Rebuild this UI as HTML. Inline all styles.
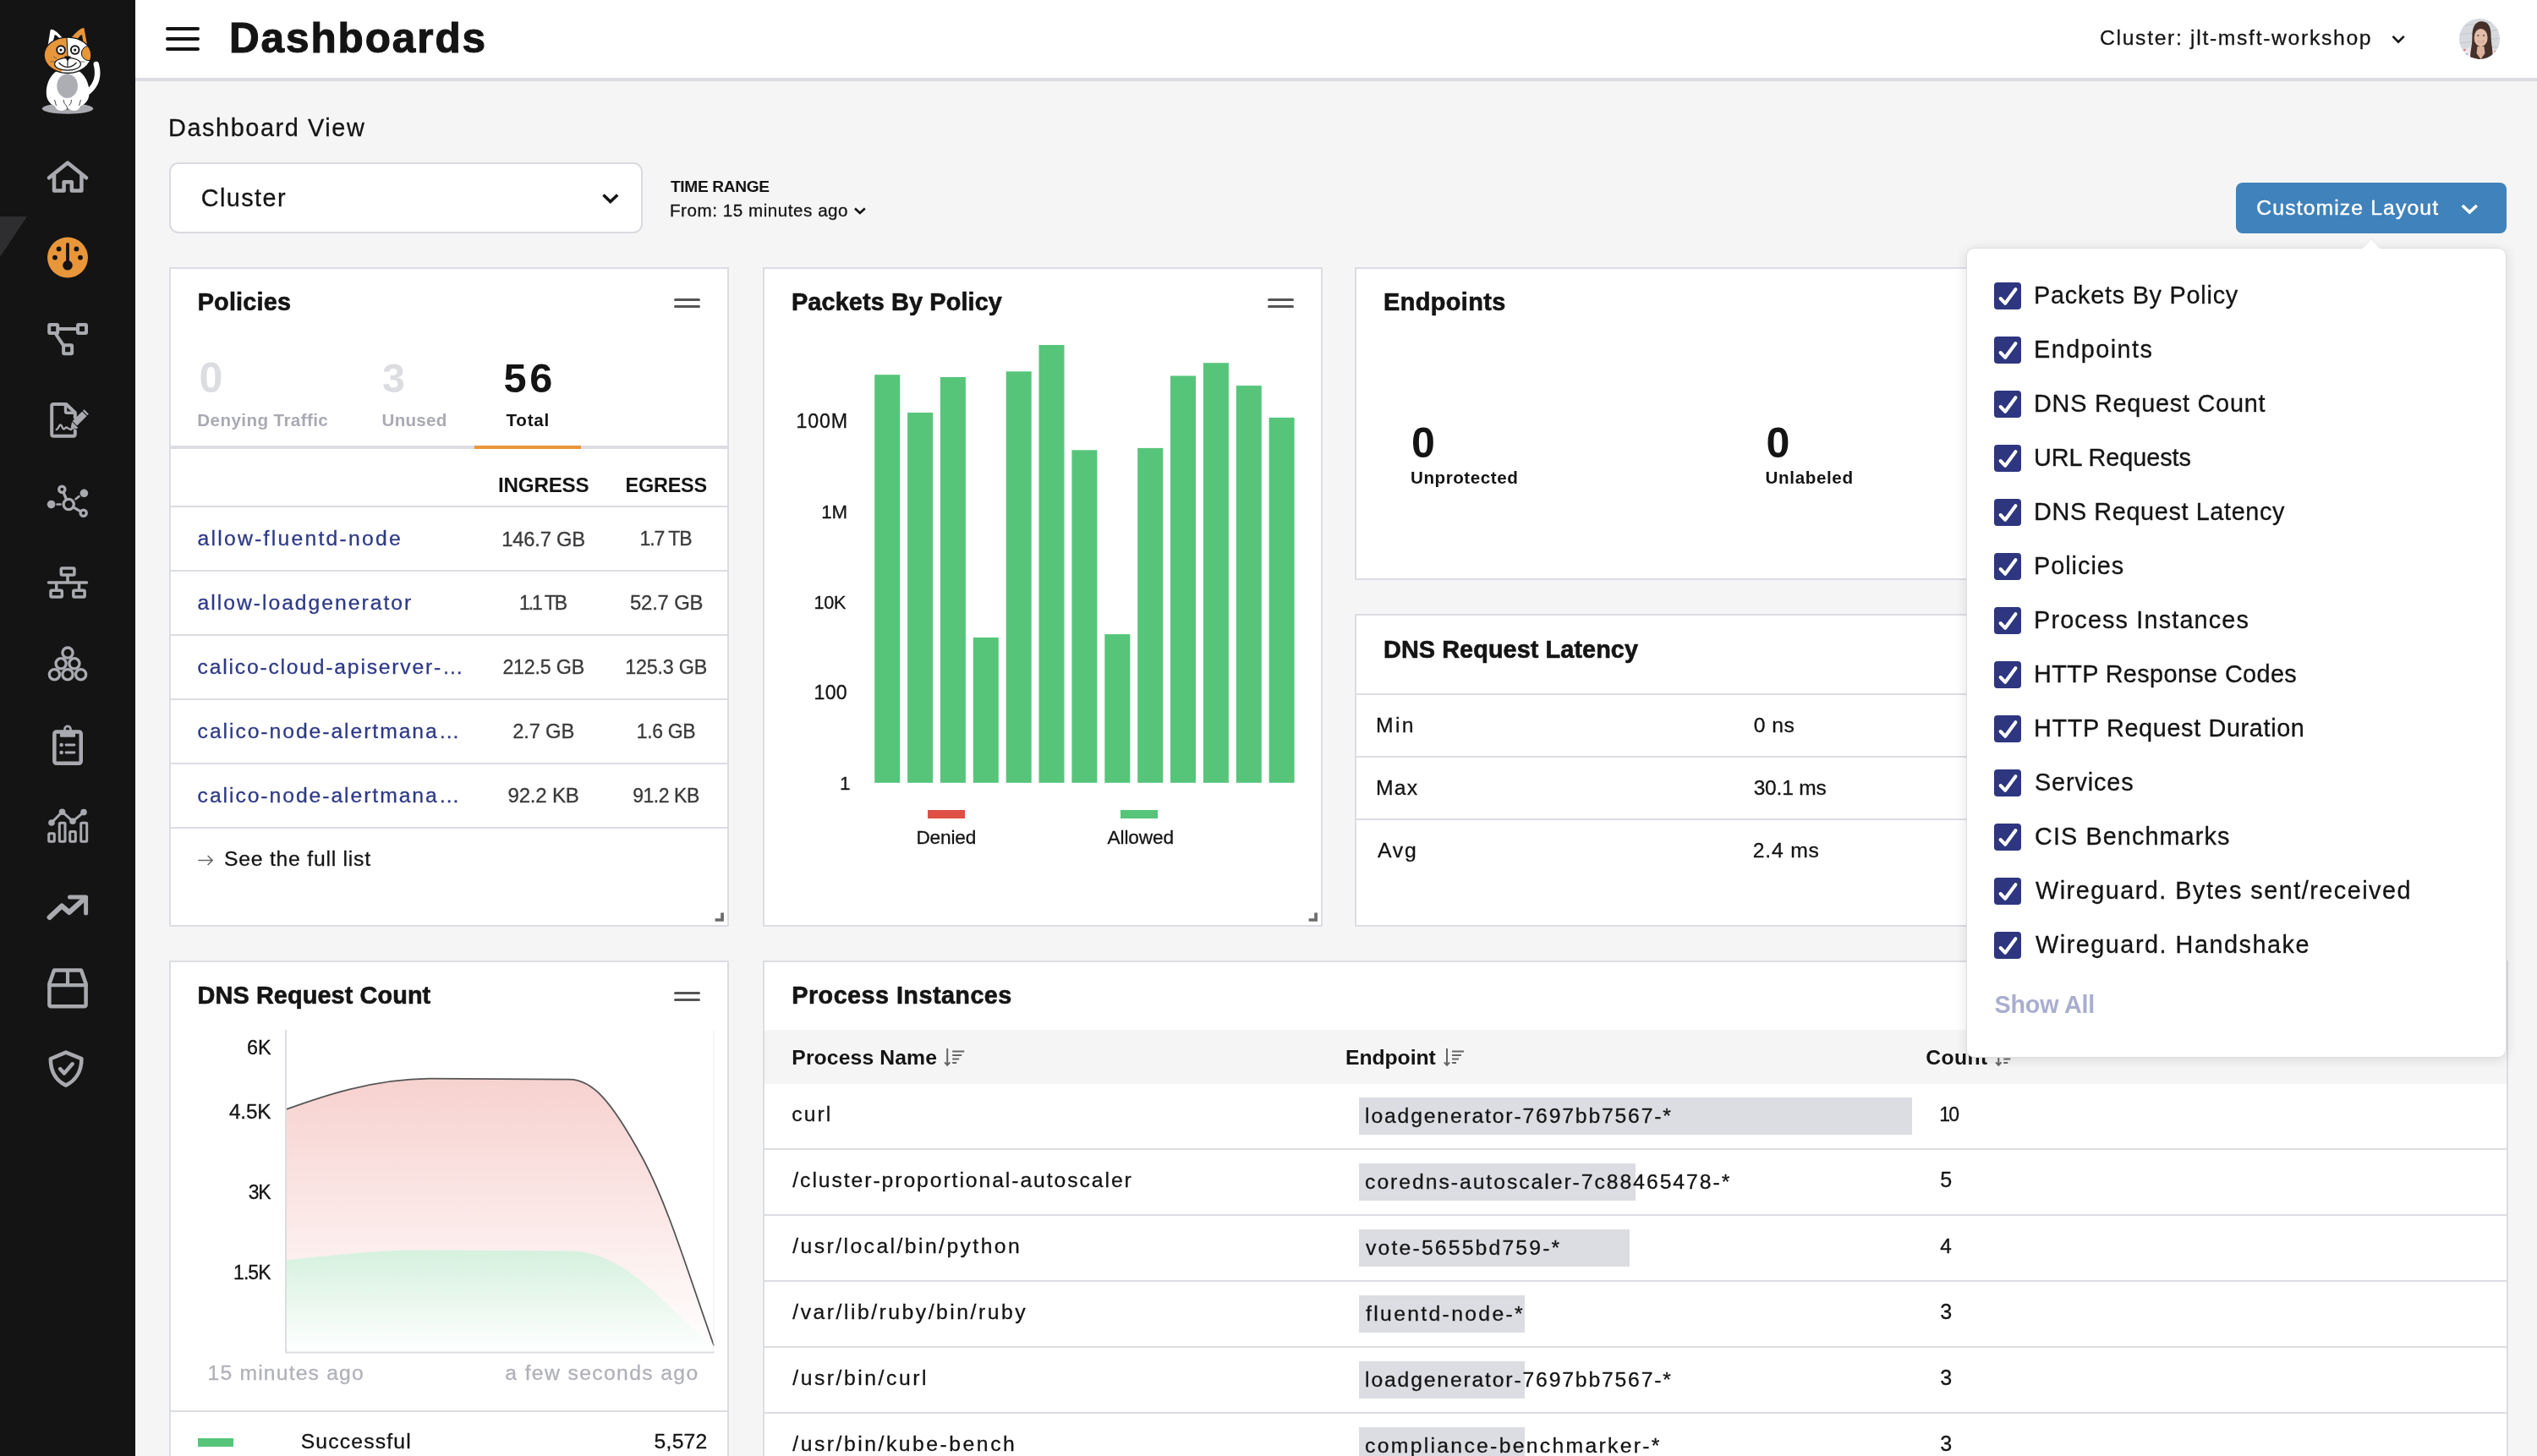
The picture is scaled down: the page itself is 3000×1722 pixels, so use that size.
<!DOCTYPE html>
<html lang="en"><head><meta charset="utf-8"><title>Dashboards</title>
<style>
html,body{margin:0;padding:0;}
body{width:3000px;height:1722px;overflow:hidden;position:relative;background:#f5f5f5;font-family:"Liberation Sans", Arial, sans-serif;color:#141414;}
.t{position:absolute;white-space:nowrap;line-height:1;}
.L{position:absolute;left:0;top:0;width:3000px;height:1722px;will-change:transform;pointer-events:none;}
.b{position:absolute;box-sizing:border-box;}
.card{position:absolute;box-sizing:border-box;background:#fff;border:2px solid #dcdde2;}
.hl{position:absolute;height:2px;background:#dcdde2;}
svg{position:absolute;overflow:visible;}
</style></head><body>
<div class="b" style="left:0px;top:0px;width:160px;height:1722px;background:#141414;"></div>
<div class="b" style="left:160px;top:0px;width:2840px;height:96px;background:#fff;border-bottom:4px solid #dcdde2;"></div>
<div class="b" style="left:200px;top:192px;width:560px;height:84px;background:#fff;border:2px solid #dadbe0;border-radius:11px;"></div>
<div class="b" style="left:2644px;top:216px;width:320px;height:60px;background:#4082bb;border-radius:8px;"></div>
<div class="card" style="left:200px;top:316px;width:662px;height:780px;"></div>
<div class="card" style="left:902px;top:316px;width:662px;height:780px;"></div>
<div class="card" style="left:1602px;top:316px;width:1360px;height:370px;"></div>
<div class="card" style="left:1602px;top:726px;width:1360px;height:370px;"></div>
<div class="card" style="left:200px;top:1136px;width:662px;height:700px;"></div>
<div class="card" style="left:902px;top:1136px;width:2064px;height:700px;"></div>
<div class="hl" style="left:202px;top:527px;width:658px;height:4px;"></div>
<div class="hl" style="left:561px;top:527px;width:126px;height:4px;background:#e8963a;"></div>
<div class="hl" style="left:202px;top:598px;width:658px;"></div>
<div class="hl" style="left:202px;top:674px;width:658px;"></div>
<div class="hl" style="left:202px;top:750px;width:658px;"></div>
<div class="hl" style="left:202px;top:826px;width:658px;"></div>
<div class="hl" style="left:202px;top:902px;width:658px;"></div>
<div class="hl" style="left:202px;top:978px;width:658px;"></div>
<div class="hl" style="left:1604px;top:820px;width:1356px;"></div>
<div class="hl" style="left:1604px;top:894px;width:1356px;"></div>
<div class="hl" style="left:1604px;top:968px;width:1356px;"></div>
<div class="hl" style="left:202px;top:1668px;width:658px;"></div>
<div class="b" style="left:904px;top:1218px;width:2060px;height:64px;background:#f5f5f5;"></div>
<div class="hl" style="left:904px;top:1358px;width:2060px;"></div>
<div class="hl" style="left:904px;top:1436px;width:2060px;"></div>
<div class="hl" style="left:904px;top:1514px;width:2060px;"></div>
<div class="hl" style="left:904px;top:1592px;width:2060px;"></div>
<div class="hl" style="left:904px;top:1670px;width:2060px;"></div>
<div class="b" style="left:1607px;top:1298px;width:653.6px;height:44px;background:#dcdde2;"></div>
<div class="b" style="left:1607px;top:1376px;width:326.7px;height:44px;background:#dcdde2;"></div>
<div class="b" style="left:1607px;top:1454px;width:319.9px;height:44px;background:#dcdde2;"></div>
<div class="b" style="left:1607px;top:1532px;width:195.6px;height:44px;background:#dcdde2;"></div>
<div class="b" style="left:1607px;top:1610px;width:195.6px;height:44px;background:#dcdde2;"></div>
<div class="b" style="left:1607px;top:1688px;width:195.6px;height:44px;background:#dcdde2;"></div>
<div class="b" style="left:1097px;top:958px;width:44px;height:10px;background:#de4f45;"></div>
<div class="b" style="left:1325px;top:958px;width:44px;height:10px;background:#56c57a;"></div>
<div class="b" style="left:234px;top:1701px;width:42px;height:10px;background:#56c57a;"></div>
<svg width="3000" height="1722" viewBox="0 0 3000 1722" style="left:0;top:0;">
<path d="M0,256 H32 L0,304 Z" fill="#2e2e30"/>
<g stroke="#141414" stroke-width="4" stroke-linecap="round"><path d="M198,34 H234 M198,46 H234 M198,58 H234"/></g>
<path d="M2829.5,42.8 L2836,49.6 L2842.7,42.8" fill="none" stroke="#141414" stroke-width="2.6" />
<path d="M713.5,230.5 L721.8,238.5 L730.2,230.5" fill="none" stroke="#141414" stroke-width="3.6"/>
<path d="M1011,246.5 L1016.9,252 L1022.8,246.5" fill="none" stroke="#141414" stroke-width="2.6"/>
<path d="M2911.8,243 L2920.3,251 L2928.8,243" fill="none" stroke="#fff" stroke-width="3.6"/>
<g stroke="#555" stroke-width="3" stroke-linecap="round"><path d="M798.5,354.5 H826.5 M798.5,362.5 H826.5"/></g>
<g stroke="#555" stroke-width="3" stroke-linecap="round"><path d="M1500.5,354.5 H1528.5 M1500.5,362.5 H1528.5"/></g>
<g stroke="#555" stroke-width="3" stroke-linecap="round"><path d="M798.5,1174.5 H826.5 M798.5,1182.5 H826.5"/></g>
<path d="M852.2,1079.6 H855.9 V1089.8 H845.6 V1086.2 H852.2 Z" fill="#6b6b6b"/>
<path d="M1554.1999999999998,1079.6 H1557.8999999999999 V1089.8 H1547.6 V1086.2 H1554.1999999999998 Z" fill="#6b6b6b"/>
<path d="M234.3,1017.5 H251 M245.6,1012 L251.2,1017.5 L245.6,1023" fill="none" stroke="#666" stroke-width="1.5"/>
<g fill="#56c57a">
<rect x="1034.2" y="443.2" width="30" height="482.6"/>
<rect x="1073.1" y="488.0" width="30" height="437.8"/>
<rect x="1111.9" y="446.0" width="30" height="479.8"/>
<rect x="1150.8" y="754.0" width="30" height="171.8"/>
<rect x="1189.7" y="439.3" width="30" height="486.5"/>
<rect x="1228.5" y="408.0" width="30" height="517.8"/>
<rect x="1267.4" y="532.3" width="30" height="393.5"/>
<rect x="1306.3" y="750.1" width="30" height="175.7"/>
<rect x="1345.2" y="529.9" width="30" height="395.9"/>
<rect x="1384.0" y="444.5" width="30" height="481.3"/>
<rect x="1422.9" y="429.2" width="30" height="496.6"/>
<rect x="1461.8" y="456.1" width="30" height="469.7"/>
<rect x="1500.6" y="493.9" width="30" height="431.9"/>
</g>
<defs>
<linearGradient id="gr" x1="0" y1="0" x2="0" y2="1"><stop offset="0" stop-color="#de4f45" stop-opacity="0.26"/><stop offset="1" stop-color="#de4f45" stop-opacity="0.0"/></linearGradient>
<linearGradient id="gg" x1="0" y1="0" x2="0" y2="1"><stop offset="0" stop-color="#56c57a" stop-opacity="0.25"/><stop offset="1" stop-color="#56c57a" stop-opacity="0.0"/></linearGradient>
<linearGradient id="gw" x1="0" y1="0" x2="0" y2="1"><stop offset="0" stop-color="#fff" stop-opacity="1"/><stop offset="1" stop-color="#fff" stop-opacity="1"/></linearGradient>
</defs>
<path d="M338,1312.2 C380,1297 440,1276 508.3,1275.6 L673.2,1276.7 C700,1277 722,1300 759.2,1368.5 C790,1425 815,1510 844.2,1591.5 L844.2,1599 L338,1599 Z" fill="url(#gr)" transform="translate(0,0)"/>
<path d="M338,1490.4 C400,1484 450,1478.5 493.9,1478.5 L673.2,1479.6 C710,1480 740,1498 773.6,1528 C800,1552 825,1578 844.2,1591.5 L844.2,1599 L338,1599 Z" fill="#fff"/>
<path d="M338,1490.4 C400,1484 450,1478.5 493.9,1478.5 L673.2,1479.6 C710,1480 740,1498 773.6,1528 C800,1552 825,1578 844.2,1591.5 L844.2,1599 L338,1599 Z" fill="url(#gg)"/>
<path d="M338,1312.2 C380,1297 440,1276 508.3,1275.6 L673.2,1276.7 C700,1277 722,1300 759.2,1368.5 C790,1425 815,1510 844.2,1591.5" fill="none" stroke="#555" stroke-width="1.8"/>
<path d="M338,1218 V1599.5 H844.5" fill="none" stroke="#dcdde2" stroke-width="2"/>
<path d="M844,1218 V1599" fill="none" stroke="#f0f0f3" stroke-width="1"/>
<g stroke="#666" fill="none" stroke-width="2"><path d="M1120.2,1240 V1259.5 M1117.0,1256.3 L1120.2,1259.8 L1123.4,1256.3"/><path d="M1126.2,1243.5 H1140.2 M1126.2,1248 H1137.2 M1126.2,1252.5 H1134.2 M1126.2,1257 H1131.2"/></g>
<g stroke="#666" fill="none" stroke-width="2"><path d="M1711,1240 V1259.5 M1707.8,1256.3 L1711,1259.8 L1714.2,1256.3"/><path d="M1717,1243.5 H1731 M1717,1248 H1728 M1717,1252.5 H1725 M1717,1257 H1722"/></g>
<g stroke="#666" fill="none" stroke-width="2"><path d="M2363.3,1240 V1259.5 M2360.1000000000004,1256.3 L2363.3,1259.8 L2366.5,1256.3"/><path d="M2369.3,1243.5 H2383.3 M2369.3,1248 H2380.3 M2369.3,1252.5 H2377.3 M2369.3,1257 H2374.3"/></g>
<g fill="none" stroke="#a9aab0" stroke-linecap="round" stroke-linejoin="round">
<path d="M58,210.3 L80,192.6 L102,210.3" stroke-width="4.5"/><path d="M64,207 V225.6 H75.6 V215.2 H84.8 V225.6 H96.4 V207" stroke-width="4.5"/>
<g stroke-width="4"><rect x="58.2" y="383.9" width="10" height="10" rx="1"/><rect x="92" y="383.9" width="10" height="10" rx="1"/><rect x="75.1" y="408.2" width="10" height="10" rx="1"/><path d="M70,389 H90 M66.6,396 L75.6,409.4"/></g>
<g stroke-width="4"><path d="M77,478 H63.4 q-2.2,0 -2.2,2.2 V513.5 q0,2.2 2.2,2.2 H86.6 q2.2,0 2.2,-2.2 V509.5 M88.8,494 V488 L78.5,478.2"/><path d="M77.5,479 V486.5 q0,1.8 1.8,1.8 H88" stroke-width="3.4"/></g>
<path d="M102.2,487 L88.4,500.8" stroke-width="7.6" stroke-linecap="butt"/><path d="M84,507.6 L85.4,499.6 L91.6,505.8 Z" fill="#a9aab0" stroke-width="1"/><path d="M96.6,485.4 L103.4,492.2" stroke="#141414" stroke-width="1.1" stroke-linecap="butt"/>
<path d="M66.8,508 C69,508 69.5,502.5 71.5,502.5 C73.5,502.5 73.5,507.5 75.5,507.5 C77,507.5 77,505.5 78.5,505.5 C80,505.5 81,508 84,508" stroke-width="2.4"/>
<g stroke-width="3.3"><circle cx="81.2" cy="596.5" r="6.1"/><circle cx="73.3" cy="578.8" r="3.6"/><circle cx="98.7" cy="606.7" r="3.6"/><path d="M75.3,583.2 L78.3,590 M87.6,600.4 L94.8,604.6"/><path d="M89.5,590.2 L93.5,587 M67.5,596.5 H71.5" stroke-width="2.6"/></g>
<circle cx="99.4" cy="583.3" r="4.8" fill="#a9aab0" stroke="none"/><circle cx="60.6" cy="596.5" r="4.8" fill="#a9aab0" stroke="none"/>
<g stroke-width="3.5"><rect x="72.3" y="672" width="15.6" height="8" rx="1.2"/><rect x="60" y="698.2" width="13.3" height="7.8" rx="1.2"/><rect x="86.8" y="698.2" width="13.3" height="7.8" rx="1.2"/><path d="M57.5,688.9 H102.5 M80,682 V688 M66.7,689 V696.5 M93.5,689 V696.5"/></g>
<g stroke-width="3.3"><circle cx="80" cy="772.1" r="6.1"/><circle cx="72.1" cy="784.8" r="6.1"/><circle cx="87.9" cy="784.8" r="6.1"/><circle cx="64.4" cy="797.7" r="6.1"/><circle cx="80" cy="797.7" r="6.1"/><circle cx="95.6" cy="797.7" r="6.1"/></g>
<rect x="64.35" y="865.4" width="31.4" height="37.4" rx="2.5" stroke-width="4.5"/>
<rect x="71" y="864" width="18" height="7.8" rx="1" fill="#a9aab0" stroke="none"/><circle cx="80" cy="862.5" r="3.6" stroke-width="2.6"/>
<circle cx="72.6" cy="881" r="2.3" fill="#a9aab0" stroke="none"/><circle cx="72.6" cy="890" r="2.3" fill="#a9aab0" stroke="none"/><path d="M78,881 H88 M78,890 H88" stroke-width="2.8"/>
<g stroke-width="3"><rect x="57.7" y="985.7" width="6.6" height="9.5" rx="1"/><rect x="70.3" y="973.2" width="6.7" height="22" rx="1"/><rect x="82.7" y="983.5" width="6.6" height="11.7" rx="1"/><rect x="95.7" y="973.2" width="7" height="22" rx="1"/><path d="M61,973 L73.5,960.2 L86,971.3 L99,960.6"/></g>
<circle cx="61" cy="973" r="3.8" fill="#a9aab0" stroke="none"/><circle cx="73.5" cy="960.2" r="3.8" fill="#a9aab0" stroke="none"/><circle cx="86" cy="971.3" r="3.8" fill="#a9aab0" stroke="none"/><circle cx="99" cy="960.6" r="3.8" fill="#a9aab0" stroke="none"/>
<path d="M58.6,1085 L73.1,1071.4 L81.8,1079 L98.5,1064" stroke-width="6"/><path d="M82.5,1061 H101.6 V1080" stroke-width="5"/>
<g stroke-width="4.5"><path d="M64,1147.6 H96 L101.6,1163.5 V1188 q0,2.2 -2.2,2.2 H60.6 q-2.2,0 -2.2,-2.2 V1163.5 Z"/><path d="M58.4,1165.2 H101.6 M80,1148 V1165" stroke-width="4.2"/></g>
<g stroke-width="4.5"><path d="M77.9,1244.6 L96.4,1252.2 C96.4,1268 88.5,1278.5 77.9,1283.6 C67.3,1278.5 59.8,1268 59.8,1252.2 Z"/><path d="M71.2,1264.2 L76,1269.4 L85.6,1258.3"/></g>
</g>
<circle cx="80" cy="304.6" r="24" fill="#e8963a"/><g fill="#141414"><circle cx="80" cy="313.8" r="5.8"/><rect x="78.1" y="287" width="3.8" height="26" rx="1.9"/><circle cx="69.6" cy="294.4" r="2.9"/><circle cx="90.4" cy="294.4" r="2.9"/><circle cx="65" cy="304.6" r="2.9"/><circle cx="95" cy="304.6" r="2.9"/></g>
<g>
<ellipse cx="80" cy="128.5" rx="30.2" ry="6.3" fill="#a9aab0"/>
<path d="M105,108 C113,101 117.5,90 113.8,76" fill="none" stroke="#fff" stroke-width="6.5" stroke-linecap="round"/>
<path d="M80.2,80 C97,80 106,96 105.6,110 C105.2,121 98,128 80.2,128 C62.4,128 55,121 54.8,110 C54.4,96 63.4,80 80.2,80 Z" fill="#fff"/>
<ellipse cx="72.5" cy="125" rx="7.5" ry="6" fill="#fff"/><ellipse cx="87.5" cy="125" rx="7.5" ry="6" fill="#fff"/>
<path d="M64.5,118 L66.5,125 M95.5,118 L93.5,125 M75,118 Q75.5,123 78.5,125 Q80,128 80,130 M84.5,118 Q84.5,123 81.5,125" fill="none" stroke="#141414" stroke-width="0.8"/>
<ellipse cx="79.6" cy="101.7" rx="12.3" ry="14.3" fill="#adaeb4"/>
<path d="M56.6,54 L59.6,35.5 Q62.5,31.5 75,46 Z" fill="#fff"/><path d="M62.6,50 L64.6,41.2 Q66,40.5 71.5,46.6 Z" fill="#141414"/>
<path d="M84,45 Q94.5,32.5 99.4,33 L103,53 Z" fill="#e8963a"/><path d="M91.5,46.5 Q95,41 97,41.3 L98.6,51 Z" fill="#141414"/>
<clipPath id="hd"><ellipse cx="80" cy="65.3" rx="27.9" ry="21.2"/></clipPath>
<ellipse cx="80" cy="65.3" rx="27.9" ry="21.2" fill="#fff"/>
<g clip-path="url(#hd)"><path d="M50,40 H78.8 L80.3,70 L70,90 H50 Z" fill="#e8963a"/><circle cx="105" cy="63" r="8.6" fill="#e8963a" stroke="#141414" stroke-width="1"/><path d="M78.8,40 L80.3,70" stroke="#141414" stroke-width="1" fill="none"/></g>
<ellipse cx="80" cy="65.3" rx="27.9" ry="21.2" fill="none" stroke="#141414" stroke-width="1.3"/>
<circle cx="72" cy="59.1" r="4.8" fill="#fff" stroke="#141414" stroke-width="1.9"/><circle cx="88.7" cy="59.1" r="4.8" fill="#fff" stroke="#141414" stroke-width="1.9"/>
<circle cx="72" cy="59.1" r="1.6" fill="#141414"/><circle cx="88.7" cy="59.1" r="1.6" fill="#141414"/>
<ellipse cx="80" cy="75.8" rx="15.4" ry="7.4" fill="#fff" stroke="#141414" stroke-width="1.2"/>
<path d="M69.5,74 Q80,85 90.5,74" fill="none" stroke="#141414" stroke-width="1.2"/>
<path d="M75.8,66.8 Q80,65.8 84.2,66.8 L80,72.2 Z" fill="#141414"/><path d="M80,71 V80" stroke="#141414" stroke-width="1.1"/>
<path d="M59.5,73 H65 M95,73 H100.5 M63,67 L67,69" stroke="#555" stroke-width="0.8"/>
</g>
<clipPath id="av"><circle cx="2932" cy="46" r="24"/></clipPath>
<g clip-path="url(#av)"><rect x="2908" y="22" width="48" height="48" fill="#d6dade"/>
<path d="M2908,31 L2956,25 M2908,41 L2956,35 M2908,51 L2956,45 M2908,61 L2956,55" stroke="#c2c7cd" stroke-width="1"/>
<path d="M2910,72 C2911,60 2919,55 2926,54.5 L2940,54.5 C2948,55 2953,60 2955,72 Z" fill="#eee8ec"/>
<circle cx="2914.5" cy="59" r="1.3" fill="#d8748a"/><circle cx="2917" cy="64" r="1.1" fill="#7d8fc0"/><circle cx="2950.5" cy="61" r="1.2" fill="#d8748a"/>
<path d="M2935,25.3 C2926.5,25 2923.2,33 2923.4,44 C2923.5,54 2920.8,61 2921.2,67.5 L2930,70 L2938,70 L2947.6,66 C2947.9,58 2945.6,52 2945.6,42 C2945.6,32 2942.5,25.6 2935,25.3 Z" fill="#46302a"/>
<path d="M2929.5,55 H2937.5 L2938.5,63 L2933.5,70 L2928.5,63 Z" fill="#dcb09b"/>
<ellipse cx="2933.6" cy="44.6" rx="8" ry="10.6" fill="#e3bda9"/>
<path d="M2936,26.2 C2929.5,27.5 2925,35.5 2925.2,48 C2921.5,36 2927,25.8 2936,26.2 Z M2936,26.2 C2941.5,28.5 2942.6,38 2942,49 C2946.5,38 2943.5,26.6 2936,26.2 Z" fill="#46302a"/>
<ellipse cx="2930.3" cy="42" rx="1.3" ry="0.8" fill="#4a3630"/><ellipse cx="2937" cy="42" rx="1.3" ry="0.8" fill="#4a3630"/>
<path d="M2929.8,48.6 Q2933.6,52.8 2937.4,48.6 Q2933.6,50 2929.8,48.6 Z" fill="#fff" stroke="#b87468" stroke-width="0.6"/>
</g>
</svg>
<div class="L">
<span class="t" style="left:271.0px;top:20.0px;font-size:49.44px;font-weight:700;letter-spacing:1.92px;-webkit-text-stroke:1.09px;">Dashboards</span>
<span class="t" style="left:2483.0px;top:33.4px;font-size:24.72px;letter-spacing:1.67px;-webkit-text-stroke:0.3px;">Cluster: jlt-msft-workshop</span>
<span class="t" style="left:199.0px;top:137.1px;font-size:28.84px;letter-spacing:1.60px;-webkit-text-stroke:0.3px;">Dashboard View</span>
<span class="t" style="left:237.7px;top:219.5px;font-size:28.84px;letter-spacing:1.43px;-webkit-text-stroke:0.3px;">Cluster</span>
<span class="t" style="left:793.0px;top:210.6px;font-size:19.16px;font-weight:700;letter-spacing:-0.35px;">TIME RANGE</span>
<span class="t" style="left:792.0px;top:239.2px;font-size:20.6px;letter-spacing:0.54px;-webkit-text-stroke:0.3px;">From: 15 minutes ago</span>
<span class="t" style="left:2668.3px;top:234.0px;font-size:24.72px;letter-spacing:1.13px;color:#ffffff;-webkit-text-stroke:0.4px;">Customize Layout</span>
<span class="t" style="left:233.7px;top:343.1px;font-size:28.84px;font-weight:700;letter-spacing:0.18px;-webkit-text-stroke:0.63px;">Policies</span>
<span class="t" style="left:235.4px;top:421.7px;font-size:50.18px;font-weight:700;color:#dcdde1;">0</span>
<span class="t" style="left:233.3px;top:487.1px;font-size:20.6px;font-weight:700;letter-spacing:0.41px;color:#a9aab3;">Denying Traffic</span>
<span class="t" style="left:452.0px;top:423.1px;font-size:48.53px;font-weight:700;color:#dcdde1;">3</span>
<span class="t" style="left:451.6px;top:487.1px;font-size:20.6px;font-weight:700;letter-spacing:0.23px;color:#a9aab3;">Unused</span>
<span class="t" style="left:595.4px;top:423.0px;font-size:48.72px;font-weight:700;letter-spacing:3.70px;">56</span>
<span class="t" style="left:598.4px;top:487.1px;font-size:20.6px;font-weight:700;letter-spacing:0.81px;">Total</span>
<span class="t" style="left:589.0px;top:562.3px;font-size:24.19px;font-weight:700;letter-spacing:-0.20px;">INGRESS</span>
<span class="t" style="left:739.5px;top:563.0px;font-size:23.44px;font-weight:700;letter-spacing:-0.20px;">EGRESS</span>
<span class="t" style="left:233.6px;top:624.7px;font-size:24.72px;letter-spacing:2.24px;color:#2e3a87;-webkit-text-stroke:0.3px;">allow-fluentd-node</span>
<span class="t" style="left:593.2px;top:625.5px;font-size:23.77px;letter-spacing:-0.20px;color:#3a3a3c;-webkit-text-stroke:0.3px;">146.7 GB</span>
<span class="t" style="left:756.6px;top:626.1px;font-size:22.99px;letter-spacing:-1.07px;color:#3a3a3c;-webkit-text-stroke:0.3px;">1.7 TB</span>
<span class="t" style="left:233.6px;top:700.7px;font-size:24.72px;letter-spacing:1.97px;color:#2e3a87;-webkit-text-stroke:0.3px;">allow-loadgenerator</span>
<span class="t" style="left:614.1px;top:702.1px;font-size:22.99px;letter-spacing:-2.07px;color:#3a3a3c;-webkit-text-stroke:0.3px;">1.1 TB</span>
<span class="t" style="left:745.0px;top:701.4px;font-size:23.9px;letter-spacing:-0.20px;color:#3a3a3c;-webkit-text-stroke:0.3px;">52.7 GB</span>
<span class="t" style="left:233.6px;top:776.7px;font-size:24.72px;letter-spacing:1.77px;color:#2e3a87;-webkit-text-stroke:0.3px;">calico-cloud-apiserver-…</span>
<span class="t" style="left:594.4px;top:777.9px;font-size:23.24px;letter-spacing:-0.20px;color:#3a3a3c;-webkit-text-stroke:0.3px;">212.5 GB</span>
<span class="t" style="left:739.2px;top:777.9px;font-size:23.31px;letter-spacing:-0.20px;color:#3a3a3c;-webkit-text-stroke:0.3px;">125.3 GB</span>
<span class="t" style="left:233.6px;top:852.7px;font-size:24.72px;letter-spacing:1.93px;color:#2e3a87;-webkit-text-stroke:0.3px;">calico-node-alertmana…</span>
<span class="t" style="left:606.2px;top:853.4px;font-size:23.82px;letter-spacing:-0.20px;color:#3a3a3c;-webkit-text-stroke:0.3px;">2.7 GB</span>
<span class="t" style="left:752.8px;top:854.1px;font-size:22.99px;letter-spacing:-0.34px;color:#3a3a3c;-webkit-text-stroke:0.3px;">1.6 GB</span>
<span class="t" style="left:233.6px;top:928.7px;font-size:24.72px;letter-spacing:1.93px;color:#2e3a87;-webkit-text-stroke:0.3px;">calico-node-alertmana…</span>
<span class="t" style="left:600.5px;top:929.2px;font-size:24.07px;letter-spacing:-0.20px;color:#3a3a3c;-webkit-text-stroke:0.3px;">92.2 KB</span>
<span class="t" style="left:748.2px;top:930.1px;font-size:22.99px;letter-spacing:-0.45px;color:#3a3a3c;-webkit-text-stroke:0.3px;">91.2 KB</span>
<span class="t" style="left:265.1px;top:1003.7px;font-size:24.72px;letter-spacing:0.76px;-webkit-text-stroke:0.3px;">See the full list</span>
<span class="t" style="left:936.0px;top:343.0px;font-size:28.84px;font-weight:700;letter-spacing:0.13px;-webkit-text-stroke:0.63px;">Packets By Policy</span>
<span class="t" style="left:941.6px;top:486.9px;font-size:23.18px;letter-spacing:0.85px;-webkit-text-stroke:0.3px;">100M</span>
<span class="t" style="left:971.3px;top:594.7px;font-size:22.26px;letter-spacing:-0.20px;-webkit-text-stroke:0.3px;">1M</span>
<span class="t" style="left:962.6px;top:702.2px;font-size:21.56px;letter-spacing:-0.31px;-webkit-text-stroke:0.3px;">10K</span>
<span class="t" style="left:962.5px;top:807.9px;font-size:23.18px;letter-spacing:0.26px;-webkit-text-stroke:0.3px;">100</span>
<span class="t" style="left:993.0px;top:916.1px;font-size:22.48px;-webkit-text-stroke:0.3px;">1</span>
<span class="t" style="left:1083.4px;top:978.7px;font-size:22.66px;letter-spacing:-0.18px;-webkit-text-stroke:0.3px;">Denied</span>
<span class="t" style="left:1309.5px;top:978.7px;font-size:22.66px;letter-spacing:-0.11px;-webkit-text-stroke:0.3px;">Allowed</span>
<span class="t" style="left:1636.0px;top:343.0px;font-size:28.84px;font-weight:700;letter-spacing:0.41px;-webkit-text-stroke:0.63px;">Endpoints</span>
<span class="t" style="left:1669.0px;top:498.6px;font-size:50.18px;font-weight:700;">0</span>
<span class="t" style="left:1668.0px;top:554.8px;font-size:20.6px;font-weight:700;letter-spacing:0.55px;">Unprotected</span>
<span class="t" style="left:2088.5px;top:498.6px;font-size:50.18px;font-weight:700;">0</span>
<span class="t" style="left:2087.6px;top:554.8px;font-size:20.6px;font-weight:700;letter-spacing:0.62px;">Unlabeled</span>
<span class="t" style="left:1636.0px;top:754.1px;font-size:28.84px;font-weight:700;letter-spacing:0.08px;-webkit-text-stroke:0.63px;">DNS Request Latency</span>
<span class="t" style="left:1627.0px;top:845.6px;font-size:24.72px;letter-spacing:2.36px;-webkit-text-stroke:0.3px;">Min</span>
<span class="t" style="left:2073.7px;top:845.6px;font-size:24.72px;letter-spacing:0.48px;-webkit-text-stroke:0.3px;">0 ns</span>
<span class="t" style="left:1627.0px;top:919.6px;font-size:24.72px;letter-spacing:1.23px;-webkit-text-stroke:0.3px;">Max</span>
<span class="t" style="left:2073.7px;top:919.7px;font-size:24.53px;letter-spacing:-0.20px;-webkit-text-stroke:0.3px;">30.1 ms</span>
<span class="t" style="left:1629.0px;top:993.6px;font-size:24.72px;letter-spacing:1.80px;-webkit-text-stroke:0.3px;">Avg</span>
<span class="t" style="left:2072.7px;top:993.6px;font-size:24.72px;letter-spacing:0.82px;-webkit-text-stroke:0.3px;">2.4 ms</span>
<span class="t" style="left:233.6px;top:1163.1px;font-size:28.84px;font-weight:700;letter-spacing:0.11px;-webkit-text-stroke:0.63px;">DNS Request Count</span>
<span class="t" style="left:292.1px;top:1227.9px;font-size:23.43px;letter-spacing:-0.20px;-webkit-text-stroke:0.3px;">6K</span>
<span class="t" style="left:271.0px;top:1303.1px;font-size:24.35px;letter-spacing:-0.20px;-webkit-text-stroke:0.3px;">4.5K</span>
<span class="t" style="left:293.8px;top:1399.3px;font-size:22.99px;letter-spacing:-1.40px;-webkit-text-stroke:0.3px;">3K</span>
<span class="t" style="left:276.1px;top:1494.0px;font-size:22.99px;letter-spacing:-0.95px;-webkit-text-stroke:0.3px;">1.5K</span>
<span class="t" style="left:245.6px;top:1612.0px;font-size:24.72px;letter-spacing:1.16px;color:#b0b1b9;-webkit-text-stroke:0.3px;">15 minutes ago</span>
<span class="t" style="left:597.3px;top:1612.0px;font-size:24.72px;letter-spacing:1.36px;color:#b0b1b9;-webkit-text-stroke:0.3px;">a few seconds ago</span>
<span class="t" style="left:355.7px;top:1693.2px;font-size:24.72px;letter-spacing:1.17px;-webkit-text-stroke:0.3px;">Successful</span>
<span class="t" style="left:773.6px;top:1693.2px;font-size:24.72px;letter-spacing:0.22px;-webkit-text-stroke:0.3px;">5,572</span>
<span class="t" style="left:936.3px;top:1163.3px;font-size:28.84px;font-weight:700;letter-spacing:0.43px;-webkit-text-stroke:0.63px;">Process Instances</span>
<span class="t" style="left:936.3px;top:1238.7px;font-size:24.72px;font-weight:700;letter-spacing:0.11px;">Process Name</span>
<span class="t" style="left:1591.0px;top:1238.7px;font-size:24.72px;font-weight:700;letter-spacing:-0.05px;">Endpoint</span>
<span class="t" style="left:2277.2px;top:1238.7px;font-size:24.72px;font-weight:700;letter-spacing:0.41px;">Count</span>
<span class="t" style="left:936.3px;top:1305.8px;font-size:24.72px;letter-spacing:2.02px;-webkit-text-stroke:0.3px;">curl</span>
<span class="t" style="left:1614.1px;top:1307.6px;font-size:24.72px;letter-spacing:1.83px;-webkit-text-stroke:0.3px;">loadgenerator-7697bb7567-*</span>
<span class="t" style="left:2293.3px;top:1306.9px;font-size:22.99px;letter-spacing:-1.95px;-webkit-text-stroke:0.3px;">10</span>
<span class="t" style="left:937.3px;top:1383.8px;font-size:24.72px;letter-spacing:1.93px;-webkit-text-stroke:0.3px;">/cluster-proportional-autoscaler</span>
<span class="t" style="left:1614.1px;top:1385.6px;font-size:24.72px;letter-spacing:1.96px;-webkit-text-stroke:0.3px;">coredns-autoscaler-7c88465478-*</span>
<span class="t" style="left:2294.2px;top:1383.2px;font-size:25.1px;-webkit-text-stroke:0.3px;">5</span>
<span class="t" style="left:937.3px;top:1461.8px;font-size:24.72px;letter-spacing:2.43px;-webkit-text-stroke:0.3px;">/usr/local/bin/python</span>
<span class="t" style="left:1615.1px;top:1463.6px;font-size:24.72px;letter-spacing:2.17px;-webkit-text-stroke:0.3px;">vote-5655bd759-*</span>
<span class="t" style="left:2294.2px;top:1461.8px;font-size:24.37px;-webkit-text-stroke:0.3px;">4</span>
<span class="t" style="left:937.3px;top:1539.8px;font-size:24.72px;letter-spacing:2.51px;-webkit-text-stroke:0.3px;">/var/lib/ruby/bin/ruby</span>
<span class="t" style="left:1615.1px;top:1541.6px;font-size:24.72px;letter-spacing:2.33px;-webkit-text-stroke:0.3px;">fluentd-node-*</span>
<span class="t" style="left:2294.2px;top:1539.2px;font-size:25.1px;-webkit-text-stroke:0.3px;">3</span>
<span class="t" style="left:937.3px;top:1617.8px;font-size:24.72px;letter-spacing:2.53px;-webkit-text-stroke:0.3px;">/usr/bin/curl</span>
<span class="t" style="left:1614.1px;top:1619.6px;font-size:24.72px;letter-spacing:1.83px;-webkit-text-stroke:0.3px;">loadgenerator-7697bb7567-*</span>
<span class="t" style="left:2294.2px;top:1617.2px;font-size:25.1px;-webkit-text-stroke:0.3px;">3</span>
<span class="t" style="left:937.3px;top:1695.8px;font-size:24.72px;letter-spacing:2.52px;-webkit-text-stroke:0.3px;">/usr/bin/kube-bench</span>
<span class="t" style="left:1614.1px;top:1697.6px;font-size:24.72px;letter-spacing:2.30px;-webkit-text-stroke:0.3px;">compliance-benchmarker-*</span>
<span class="t" style="left:2294.2px;top:1695.2px;font-size:25.1px;-webkit-text-stroke:0.3px;">3</span>
</div>
<div class="b" style="left:2324.5px;top:293px;width:639px;height:958px;background:#fff;border:1px solid #dddee3;border-radius:10px;box-shadow:0 2px 14px rgba(30,30,50,0.13);"></div>
<svg width="30" height="14" viewBox="0 0 30 14" style="left:2789px;top:280.8px;"><path d="M4,13.5 L15,1.2 L26,13.5" fill="#fff" stroke="#e4e5ea" stroke-width="1"/><rect x="4" y="12.6" width="22" height="1.4" fill="#fff"/></svg>
<div class="b" style="left:2358px;top:334px;width:32px;height:32px;background:#2e3680;border-radius:4px;"></div>
<div class="b" style="left:2358px;top:398px;width:32px;height:32px;background:#2e3680;border-radius:4px;"></div>
<div class="b" style="left:2358px;top:462px;width:32px;height:32px;background:#2e3680;border-radius:4px;"></div>
<div class="b" style="left:2358px;top:526px;width:32px;height:32px;background:#2e3680;border-radius:4px;"></div>
<div class="b" style="left:2358px;top:590px;width:32px;height:32px;background:#2e3680;border-radius:4px;"></div>
<div class="b" style="left:2358px;top:654px;width:32px;height:32px;background:#2e3680;border-radius:4px;"></div>
<div class="b" style="left:2358px;top:718px;width:32px;height:32px;background:#2e3680;border-radius:4px;"></div>
<div class="b" style="left:2358px;top:782px;width:32px;height:32px;background:#2e3680;border-radius:4px;"></div>
<div class="b" style="left:2358px;top:846px;width:32px;height:32px;background:#2e3680;border-radius:4px;"></div>
<div class="b" style="left:2358px;top:910px;width:32px;height:32px;background:#2e3680;border-radius:4px;"></div>
<div class="b" style="left:2358px;top:974px;width:32px;height:32px;background:#2e3680;border-radius:4px;"></div>
<div class="b" style="left:2358px;top:1038px;width:32px;height:32px;background:#2e3680;border-radius:4px;"></div>
<div class="b" style="left:2358px;top:1102px;width:32px;height:32px;background:#2e3680;border-radius:4px;"></div>
<svg width="3000" height="1722" viewBox="0 0 3000 1722" style="left:0;top:0;pointer-events:none;"><g fill="none" stroke="#fff" stroke-width="4" stroke-linecap="round" stroke-linejoin="round">
<path d="M2365.6,353 L2371.2,358.8 L2383.4,342.2"/>
<path d="M2365.6,417 L2371.2,422.8 L2383.4,406.2"/>
<path d="M2365.6,481 L2371.2,486.8 L2383.4,470.2"/>
<path d="M2365.6,545 L2371.2,550.8 L2383.4,534.2"/>
<path d="M2365.6,609 L2371.2,614.8 L2383.4,598.2"/>
<path d="M2365.6,673 L2371.2,678.8 L2383.4,662.2"/>
<path d="M2365.6,737 L2371.2,742.8 L2383.4,726.2"/>
<path d="M2365.6,801 L2371.2,806.8 L2383.4,790.2"/>
<path d="M2365.6,865 L2371.2,870.8 L2383.4,854.2"/>
<path d="M2365.6,929 L2371.2,934.8 L2383.4,918.2"/>
<path d="M2365.6,993 L2371.2,998.8 L2383.4,982.2"/>
<path d="M2365.6,1057 L2371.2,1062.8 L2383.4,1046.2"/>
<path d="M2365.6,1121 L2371.2,1126.8 L2383.4,1110.2"/>
</g></svg>
<div class="L">
<span class="t" style="left:2405.0px;top:334.8px;font-size:28.84px;letter-spacing:0.76px;-webkit-text-stroke:0.3px;">Packets By Policy</span>
<span class="t" style="left:2405.0px;top:398.8px;font-size:28.84px;letter-spacing:1.47px;-webkit-text-stroke:0.3px;">Endpoints</span>
<span class="t" style="left:2405.0px;top:462.8px;font-size:28.84px;letter-spacing:0.77px;-webkit-text-stroke:0.3px;">DNS Request Count</span>
<span class="t" style="left:2405.0px;top:526.8px;font-size:28.84px;letter-spacing:-0.04px;-webkit-text-stroke:0.3px;">URL Requests</span>
<span class="t" style="left:2405.0px;top:590.8px;font-size:28.84px;letter-spacing:0.62px;-webkit-text-stroke:0.3px;">DNS Request Latency</span>
<span class="t" style="left:2405.0px;top:654.8px;font-size:28.84px;letter-spacing:0.98px;-webkit-text-stroke:0.3px;">Policies</span>
<span class="t" style="left:2405.0px;top:718.8px;font-size:28.84px;letter-spacing:1.15px;-webkit-text-stroke:0.3px;">Process Instances</span>
<span class="t" style="left:2405.0px;top:782.8px;font-size:28.84px;letter-spacing:0.38px;-webkit-text-stroke:0.3px;">HTTP Response Codes</span>
<span class="t" style="left:2405.0px;top:846.8px;font-size:28.84px;letter-spacing:0.64px;-webkit-text-stroke:0.3px;">HTTP Request Duration</span>
<span class="t" style="left:2406.0px;top:910.8px;font-size:28.84px;letter-spacing:0.88px;-webkit-text-stroke:0.3px;">Services</span>
<span class="t" style="left:2406.0px;top:974.8px;font-size:28.84px;letter-spacing:1.08px;-webkit-text-stroke:0.3px;">CIS Benchmarks</span>
<span class="t" style="left:2407.0px;top:1038.8px;font-size:28.84px;letter-spacing:1.48px;-webkit-text-stroke:0.3px;">Wireguard. Bytes sent/received</span>
<span class="t" style="left:2407.0px;top:1102.8px;font-size:28.84px;letter-spacing:1.51px;-webkit-text-stroke:0.3px;">Wireguard. Handshake</span>
<span class="t" style="left:2358.5px;top:1174.2px;font-size:28.74px;font-weight:700;letter-spacing:-0.20px;color:#a9aed0;">Show All</span>
</div>
</body></html>
